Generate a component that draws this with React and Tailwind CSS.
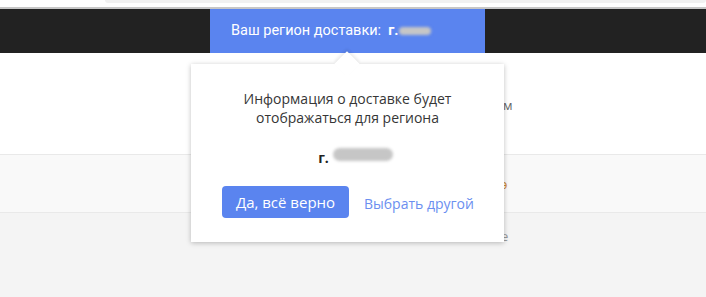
import React from "react";

function Blur({ className }) {
  return <span className={`inline-block rounded-full bg-[#c6c6c6] blur-[1.5px] ${className}`} />;
}

export default function App() {
  return (
    <div className="relative w-[706px] h-[297px] overflow-hidden bg-[#f4f4f4] font-['Roboto',sans-serif]">
      {/* top strip */}
      <div className="h-[9px] bg-white border-b-2 border-[#c6c6c6] relative">
        <div className="ml-[105px] h-[3px] rounded-b-md bg-[#f1f1f1]" />
      </div>

      {/* dark header */}
      <div className="h-[44px] bg-[#222222] flex">
        <div className="ml-[210px] w-[275px] bg-[#5a84ef] flex items-center pl-[21px] text-white text-[14.5px]">
          <span>Ваш регион доставки:</span>
          <span className="ml-[7px] font-bold">г.</span>
          <Blur className="ml-[1px] w-[32px] h-[8px]" />
        </div>
      </div>

      {/* page body */}
      <div className="h-[102px] bg-white border-b border-[#e9e9e9] flex items-start">
        <span className="ml-[503px] mt-[43px] text-[13px] text-[#666] font-['Open_Sans',sans-serif]">м</span>
      </div>
      <div className="h-[58px] bg-[#f9f9f9] border-b border-[#e9e9e9] flex items-start">
        <span className="ml-[501px] mt-[20px] text-[13px] text-[#d08a3a] font-['Open_Sans',sans-serif]">э</span>
      </div>
      <div className="flex">
        <span className="ml-[501px] mt-[14px] text-[13px] text-[#999] font-['Open_Sans',sans-serif]">е</span>
      </div>

      {/* popover */}
      <div className="absolute left-[191px] top-[64px] w-[313px] h-[178px] bg-white shadow-[0_1px_5px_rgba(0,0,0,0.25)] font-['Open_Sans',sans-serif]">
        <div className="absolute left-[147px] -top-[9px] w-[18px] h-[18px] rotate-45 bg-white shadow-[-2px_-2px_3px_rgba(0,0,0,0.08)]" />
        <div className="relative flex flex-col items-center pt-[25px] text-[14px] leading-[19px] text-[#363636]">
          <p className="text-center">
            Информация о доставке будет
            <br />
            отображаться для региона
          </p>
          <div className="mt-[21px] flex items-center pl-[16px]">
            <span className="font-bold text-[#222]">г.</span>
            <Blur className="ml-[4px] w-[60px] h-[13px] -mt-[6px]" />
          </div>
          <div className="mt-[19px] w-full flex items-center pl-[31px]">
            <button className="w-[127px] h-[32px] rounded bg-[#5a84ef] text-white text-[15px]">
              Да, всё верно
            </button>
            <a className="ml-[15px] mt-[2px] text-[14px] text-[#6c8ff0]">Выбрать другой</a>
          </div>
        </div>
      </div>
    </div>
  );
}
